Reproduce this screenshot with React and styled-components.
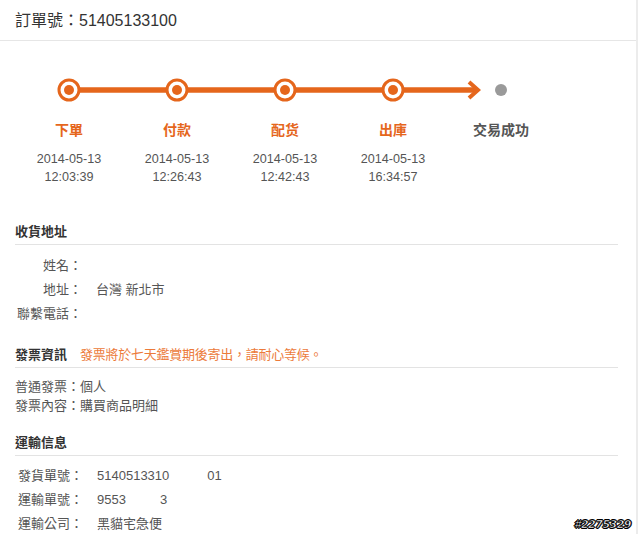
import React from "react"
import styled, { createGlobalStyle } from "styled-components"

const ORANGE = "#e5661c"

const GlobalStyle = createGlobalStyle`
	html, body {
		margin: 0;
		padding: 0;
		background: #fff;
	}
	body {
		font-family: "Liberation Sans", "Noto Sans CJK TC", Arial, sans-serif;
		color: #555;
	}
`

const Page = styled.div`
	position: relative;
	width: 636px;
	height: 534px;
	border-right: 2px solid #ececec;
	overflow: hidden;
`

const Header = styled.div`
	height: 41px;
	box-sizing: border-box;
	border-bottom: 1px solid #e6e6e6;
	padding: 0 0 2px 15px;
	display: flex;
	align-items: center;
	font-size: 16px;
	color: #333;
`

const Timeline = styled.div`
	padding: 37px 0 0 15px;
	height: 168px;
	box-sizing: border-box;
`

const Track = styled.svg`
	display: block;
	width: 540px;
	height: 24px;
`

const Steps = styled.div`
	display: flex;
	margin-top: 18px;
`

const Step = styled.div`
	width: 108px;
	display: flex;
	flex-direction: column;
	align-items: center;
`

const StepName = styled.div`
	font-size: 14px;
	font-weight: bold;
	line-height: 20px;
	color: ${(p) => (p.done ? ORANGE : "#555")};
	margin-bottom: 10px;
`

const StepTime = styled.div`
	font-size: 12.6px;
	line-height: 18px;
	color: #555;
	text-align: center;
`

const Section = styled.div`
	padding: 0 18px 0 15px;
	margin-top: ${(p) => p.top}px;
`

const SectionTitle = styled.div`
	display: flex;
	align-items: center;
	gap: 13px;
	font-size: 13px;
	line-height: 20px;
	font-weight: bold;
	color: #333;
	padding-bottom: 2px;
	border-bottom: 1px solid #e3e3e3;
`

const Notice = styled.span`
	font-weight: normal;
	color: #ec7a3a;
	letter-spacing: -0.25px;
`

const Rows = styled.div`
	margin-top: ${(p) => p.top || 9}px;
`

const Row = styled.div`
	display: flex;
	font-size: 13px;
	line-height: 24px;
	color: #555;
`

const Label = styled.div`
	width: 65px;
	margin-left: ${(p) => p.indent}px;
	text-align: ${(p) => p.align || "left"};
	flex-shrink: 0;
`

const Value = styled.div`
	margin-left: ${(p) => p.gap}px;
	display: flex;
`

const Gap = styled.span`
	display: inline-block;
	width: ${(p) => p.w}px;
`

const Line = styled.div`
	font-size: 13px;
	line-height: 19px;
	color: #555;
`

const Watermark = styled.div`
	position: absolute;
	right: 5px;
	bottom: 3px;
	font-family: "DejaVu Sans", sans-serif;
	font-size: 11px;
	font-weight: bold;
	font-style: italic;
	color: #fff;
	-webkit-text-stroke: 0.6px #000;
	text-shadow: 1px 0 #000, -1px 0 #000, 0 1px #000, 0 -1px #000;
	letter-spacing: -0.5px;
`

const steps = [
	{ name: "下單", date: "2014-05-13", time: "12:03:39", done: true },
	{ name: "付款", date: "2014-05-13", time: "12:26:43", done: true },
	{ name: "配货", date: "2014-05-13", time: "12:42:43", done: true },
	{ name: "出庫", date: "2014-05-13", time: "16:34:57", done: true },
	{ name: "交易成功" },
]

const ProgressTrack = () => (
	<Track viewBox="0 0 540 24">
		<line x1="54" y1="12" x2="462" y2="12" stroke={ORANGE} strokeWidth="5.5" />
		<polyline
			points="454,4 463,12 454,20"
			fill="none"
			stroke={ORANGE}
			strokeWidth="4"
			strokeLinejoin="miter"
		/>
		{[0, 1, 2, 3].map((i) => (
			<g key={i}>
				<circle cx={54 + i * 108} cy="12" r="10" fill="#fff" stroke={ORANGE} strokeWidth="3" />
				<circle cx={54 + i * 108} cy="12" r="5" fill={ORANGE} />
			</g>
		))}
		<circle cx={486} cy="12" r="6" fill="#9a9a9a" />
	</Track>
)

const App = () => (
	<Page>
		<GlobalStyle />
		<Header>訂單號：51405133100</Header>
		<Timeline>
			<ProgressTrack />
			<Steps>
				{steps.map((s) => (
					<Step key={s.name}>
						<StepName done={s.done}>{s.name}</StepName>
						{s.date && (
							<StepTime>
								{s.date}
								<br />
								{s.time}
							</StepTime>
						)}
					</Step>
				))}
			</Steps>
		</Timeline>

		<Section top={13}>
			<SectionTitle>收貨地址</SectionTitle>
			<Rows>
				<Row>
					<Label indent={2} align="right">姓名：</Label>
				</Row>
				<Row>
					<Label indent={2} align="right">地址：</Label>
					<Value gap={14}>台灣 新北市</Value>
				</Row>
				<Row>
					<Label indent={2} align="right">聯繫電話：</Label>
				</Row>
			</Rows>
		</Section>

		<Section top={19}>
			<SectionTitle>
				發票資訊
				<Notice>發票將於七天鑑賞期後寄出，請耐心等候。</Notice>
			</SectionTitle>
			<Rows top={9}>
				<Line>普通發票：個人</Line>
				<Line>發票內容：購買商品明細</Line>
			</Rows>
		</Section>

		<Section top={18}>
			<SectionTitle>運輸信息</SectionTitle>
			<Rows top={8}>
				<Row>
					<Label indent={3}>發貨單號：</Label>
					<Value gap={14}>
						5140513310
						<Gap w={38} />
						01
					</Value>
				</Row>
				<Row>
					<Label indent={3}>運輸單號：</Label>
					<Value gap={14}>
						9553
						<Gap w={34} />3
					</Value>
				</Row>
				<Row>
					<Label indent={3}>運輸公司：</Label>
					<Value gap={14}>黑貓宅急便</Value>
				</Row>
			</Rows>
		</Section>

		<Watermark>#2275329</Watermark>
	</Page>
)

export default App
